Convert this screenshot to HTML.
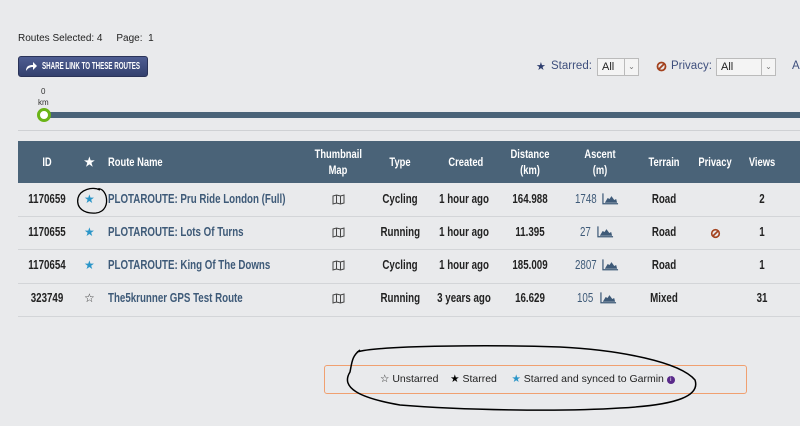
<!DOCTYPE html>
<html><head><meta charset="utf-8"><style>
*{margin:0;padding:0;box-sizing:border-box}
body{width:800px;height:426px;background:#e9eaec;font-family:"Liberation Sans",sans-serif;position:relative;overflow:hidden;color:#222}
.a{position:absolute;white-space:nowrap}
.n{transform:scaleX(.78);transform-origin:center}
.l{transform:scaleX(.78);transform-origin:left}
.btn{left:18px;top:56px;width:130px;height:21px;background:linear-gradient(#4e5d92,#33406d);border:1px solid #2a3358;border-radius:3px}
.sel{background:#f4f4f4;border:1px solid #bbb;height:18px;font-size:11px;line-height:16px;padding-left:4px}
.sel span{position:absolute;right:0;top:0;width:14px;height:16px;border-left:1px solid #bbb;font-size:8px;text-align:center;color:#777}
.hd{left:18px;top:141px;width:782px;height:42px;background:#4a6378}
.h{color:#fff;font-weight:bold;font-size:12px;text-align:center;line-height:16px}
.row{left:18px;width:782px;height:1px;background:#d3d5d8}
.c{font-size:12.5px;font-weight:bold;color:#222;text-align:center}
.rn{font-size:12.5px;color:#3e5a78;font-weight:bold}
</style></head><body>
<div class="a" style="left:18px;top:33px;font-size:10px">Routes Selected: 4&nbsp;&nbsp;&nbsp;&nbsp; Page:&nbsp; 1</div>
<div class="a btn"><svg class="a" style="left:6px;top:4px" width="13" height="11" viewBox="0 0 13 11"><path d="M1 10 C1 5 4 4 8 4 V1 L12 5 L8 9 V6 C5 6 3 7 1 10Z" fill="#fff"/></svg><div class="a" style="left:23px;top:4px;color:#fff;font-size:10px;font-weight:bold;transform:scaleX(.62);transform-origin:left">SHARE LINK TO THESE ROUTES</div></div>
<div class="a" style="left:536px;top:60px;font-size:11px;color:#2e3e6e">★</div>
<div class="a" style="left:551px;top:60px;font-size:11.5px;color:#3e4f7d">Starred:</div>
<div class="a sel" style="left:597px;top:58px;width:42px">All<span>⌄</span></div>
<svg class="a" style="left:656px;top:61px" width="11" height="11"><circle cx="5.5" cy="5.5" r="4" fill="none" stroke="#a3421e" stroke-width="1.8"/><line x1="3" y1="8" x2="8" y2="3" stroke="#a3421e" stroke-width="1.8"/></svg>
<div class="a" style="left:671px;top:60px;font-size:11.5px;color:#3e4f7d">Privacy:</div>
<div class="a sel" style="left:716px;top:58px;width:60px">All<span>⌄</span></div>
<div class="a" style="left:792px;top:60px;font-size:11.5px;color:#3e4f7d">A</div>
<div class="a" style="left:41px;top:87px;font-size:8px;color:#333">0</div>
<div class="a" style="left:38px;top:98px;font-size:8px;color:#333">km</div>
<div class="a" style="left:45px;top:112px;width:755px;height:6px;background:#4a6378"></div>
<div class="a" style="left:37px;top:108px;width:14px;height:14px;border-radius:50%;background:#fff;border:3px solid #6ab417"></div>
<div class="a" style="left:18px;top:130px;width:782px;height:1px;background:#cfd1d4"></div>
<div class="a hd"></div>
<div class="a h n" style="left:27px;top:154px;width:40px">ID</div>
<div class="a h" style="left:84px;top:154px">★</div>
<div class="a h l" style="left:108px;top:154px">Route Name</div>
<div class="a h n" style="left:308px;top:146px;width:60px">Thumbnail<br>Map</div>
<div class="a h n" style="left:380px;top:154px;width:40px">Type</div>
<div class="a h n" style="left:444px;top:154px;width:40px">Created</div>
<div class="a h n" style="left:505px;top:146px;width:50px">Distance<br>(km)</div>
<div class="a h n" style="left:575px;top:146px;width:50px">Ascent<br>(m)</div>
<div class="a h n" style="left:639px;top:154px;width:50px">Terrain</div>
<div class="a h n" style="left:690px;top:154px;width:50px">Privacy</div>
<div class="a h n" style="left:742px;top:154px;width:40px">Views</div>
<div class="a row" style="top:216px"></div>
<div class="a row" style="top:249px"></div>
<div class="a row" style="top:283px"></div>
<div class="a row" style="top:316px"></div>
<div class="a c n" style="left:18px;top:192px;width:58px">1170659</div>
<div class="a c n" style="left:18px;top:225px;width:58px">1170655</div>
<div class="a c n" style="left:18px;top:258px;width:58px">1170654</div>
<div class="a c n" style="left:18px;top:291px;width:58px">323749</div>
<div class="a" style="left:84px;top:192px;color:#2a95c8;font-size:12px">★</div>
<div class="a" style="left:84px;top:225px;color:#2a95c8;font-size:12px">★</div>
<div class="a" style="left:84px;top:258px;color:#2a95c8;font-size:12px">★</div>
<div class="a" style="left:84px;top:291px;color:#333;font-size:12px">☆</div>
<div class="a rn l" style="left:108px;top:192px">PLOTAROUTE: Pru Ride London (Full)</div>
<div class="a rn l" style="left:108px;top:225px">PLOTAROUTE: Lots Of Turns</div>
<div class="a rn l" style="left:108px;top:258px">PLOTAROUTE: King Of The Downs</div>
<div class="a rn l" style="left:108px;top:291px">The5krunner GPS Test Route</div>
<svg width="0" height="0" style="position:absolute"><defs><symbol id="m" viewBox="0 0 13 11"><path d="M1 2 L4.5 1 L8.5 2 L12 1 V9 L8.5 10 L4.5 9 L1 10Z M4.5 1V9 M8.5 2V10" fill="none" stroke="#444" stroke-width="1"/></symbol><symbol id="e" viewBox="0 0 18 12"><path d="M1 0V11H17" fill="none" stroke="#3e5a78" stroke-width="1.3"/><path d="M3 10 L6 5 L8 6 L10 3 L13 7 L15 6 L16 10Z" fill="#3e5a78"/></symbol></defs></svg>
<svg class="a" style="left:332px;top:194px" width="13" height="11"><use href="#m"/></svg>
<svg class="a" style="left:332px;top:227px" width="13" height="11"><use href="#m"/></svg>
<svg class="a" style="left:332px;top:260px" width="13" height="11"><use href="#m"/></svg>
<svg class="a" style="left:332px;top:293px" width="13" height="11"><use href="#m"/></svg>
<div class="a c n" style="left:375px;top:192px;width:50px">Cycling</div>
<div class="a c n" style="left:375px;top:225px;width:50px">Running</div>
<div class="a c n" style="left:375px;top:258px;width:50px">Cycling</div>
<div class="a c n" style="left:375px;top:291px;width:50px">Running</div>
<div class="a c n" style="left:429px;top:192px;width:70px">1 hour ago</div>
<div class="a c n" style="left:429px;top:225px;width:70px">1 hour ago</div>
<div class="a c n" style="left:429px;top:258px;width:70px">1 hour ago</div>
<div class="a c n" style="left:429px;top:291px;width:70px">3 years ago</div>
<div class="a c n" style="left:500px;top:192px;width:60px">164.988</div>
<div class="a c n" style="left:500px;top:225px;width:60px">11.395</div>
<div class="a c n" style="left:500px;top:258px;width:60px">185.009</div>
<div class="a c n" style="left:500px;top:291px;width:60px">16.629</div>
<div class="a rn l" style="left:575px;top:192px;font-weight:normal">1748</div>
<svg class="a" style="left:602px;top:193px" width="17" height="12"><use href="#e"/></svg>
<div class="a rn l" style="left:580px;top:225px;font-weight:normal">27</div>
<svg class="a" style="left:597px;top:226px" width="17" height="12"><use href="#e"/></svg>
<div class="a rn l" style="left:575px;top:258px;font-weight:normal">2807</div>
<svg class="a" style="left:602px;top:259px" width="17" height="12"><use href="#e"/></svg>
<div class="a rn l" style="left:577px;top:291px;font-weight:normal">105</div>
<svg class="a" style="left:600px;top:292px" width="17" height="12"><use href="#e"/></svg>
<div class="a c n" style="left:644px;top:192px;width:40px">Road</div>
<div class="a c n" style="left:644px;top:225px;width:40px">Road</div>
<div class="a c n" style="left:644px;top:258px;width:40px">Road</div>
<div class="a c n" style="left:644px;top:291px;width:40px">Mixed</div>
<svg class="a" style="left:710px;top:228px" width="11" height="11"><circle cx="5.5" cy="5.5" r="3.8" fill="none" stroke="#a3421e" stroke-width="1.6"/><line x1="3" y1="8" x2="8" y2="3" stroke="#a3421e" stroke-width="1.6"/></svg>
<div class="a c n" style="left:742px;top:192px;width:40px">2</div>
<div class="a c n" style="left:742px;top:225px;width:40px">1</div>
<div class="a c n" style="left:742px;top:258px;width:40px">1</div>
<div class="a c n" style="left:742px;top:291px;width:40px">31</div>
<div class="a" style="left:324px;top:365px;width:423px;height:29px;border:1px solid #f0a070;border-radius:3px"></div>
<div class="a" style="left:380px;top:373px;font-size:10.5px;color:#222">☆ Unstarred&nbsp;&nbsp;&nbsp;&nbsp;<span style="color:#000">★</span> Starred&nbsp;&nbsp;&nbsp;&nbsp;&nbsp;<span style="color:#2a95c8">★</span> Starred and synced to Garmin <span style="display:inline-block;width:8px;height:8px;border-radius:50%;background:#5a2a8a;color:#fff;font-size:6px;line-height:8px;text-align:center;vertical-align:1px">i</span></div>
<svg class="a" style="left:0;top:0" width="800" height="426">
<path d="M100 190 C92 186 80 190 78 198 C76 208 84 214 96 213 C105 212 108 204 106 196 C104 190 100 188 98 189" fill="none" stroke="#000" stroke-width="1.3"/>
<path d="M357 352 C380 345 500 345 560 347 C620 350 680 362 695 380 C700 395 680 405 620 408 C560 412 460 410 400 405 C360 398 340 388 350 372 C352 362 352 356 360 350" fill="none" stroke="#000" stroke-width="1.5"/>
</svg>
</body></html>
